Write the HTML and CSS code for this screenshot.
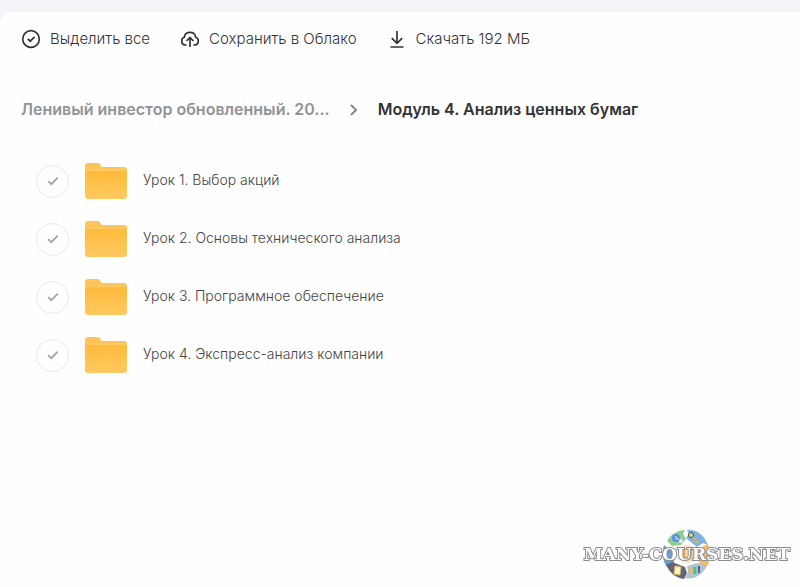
FILE: index.html
```
<!DOCTYPE html>
<html lang="ru">
<head>
<meta charset="utf-8">
<meta name="viewport" content="width=device-width, initial-scale=1">
<title>Модуль 4. Анализ ценных бумаг</title>
<link rel="stylesheet" href="styles.css">
</head>
<body>
<svg class="defs" width="0" height="0" aria-hidden="true">
  <defs>
    <linearGradient id="folder-front" x1="0" y1="0" x2="0" y2="1">
      <stop offset="0" stop-color="#ffba38"/>
      <stop offset="1" stop-color="#ffca62"/>
    </linearGradient>
    <symbol id="folder" viewBox="0 0 42 36">
      <path d="M0 3a3 3 0 0 1 3-3h9.500c1.500 0 2.300.8 3 2l.6 1.200c.4.600.8.800 1.500.800H39a3 3 0 0 1 3 3v10H0z" fill="#fdc559"/>
      <path d="M0 9a2 2 0 0 1 2-2h38a2 2 0 0 1 2 2v24a3 3 0 0 1-3 3H3a3 3 0 0 1-3-3z" fill="url(#folder-front)"/>
      <path d="M1 7.500h40" stroke="#ffca62" fill="none"/>
    </symbol>
    <symbol id="tick" viewBox="0 0 12 10">
      <path d="M1.200 5.200l3.200 3 6.300-6.600" fill="none" stroke="#a0a2a8" stroke-width="1.700"/>
    </symbol>
  </defs>
</svg>
<main class="panel">
  <div class="toolbar">
    <button class="action" type="button">
      <svg width="20" height="20" viewBox="0 0 20 20" aria-hidden="true"><circle cx="10" cy="10" r="8.300"/><path d="M6.800 9.800l2.400 2.400 4.400-4.400"/></svg>
      Выделить все
    </button>
    <button class="action" type="button">
      <svg width="20" height="20" viewBox="0 0 20 20" aria-hidden="true"><path d="M6.700 16H5.300A4 4 0 0 1 1.700 12c0-1.700 1-3.100 2.600-3.700C4.600 5.300 6.900 3.400 10 3.400s5.400 1.900 5.700 4.900c1.600.600 2.600 2 2.600 3.700a4 4 0 0 1-3.600 4h-1.400M10 18V9M6.500 12L10 8.500l3.500 3.500"/></svg>
      Сохранить в Облако
    </button>
    <button class="action" type="button">
      <svg width="20" height="20" viewBox="0 0 20 20" aria-hidden="true"><path d="M10 2v12M4.800 9.200L10 14.400l5.200-5.200M3.500 18h13"/></svg>
      Скачать 192 МБ
    </button>
  </div>
  <nav class="crumbs" aria-label="Папки">
    <a class="crumb" href="#">Ленивый инвестор обновленный. 20...</a>
    <svg class="chevron" width="10" height="14" viewBox="0 0 10 14" aria-hidden="true"><path d="M2 3l5 5-5 5"/></svg>
    <h1 class="current">Модуль 4. Анализ ценных бумаг</h1>
  </nav>
  <ul class="files">
    <li class="file">
      <label class="pick"><input type="checkbox" aria-label="Выбрать урок 1"><svg width="12" height="10"><use href="#tick"/></svg></label>
      <a class="entry" href="#"><svg width="42" height="36"><use href="#folder"/></svg><span class="name">Урок 1. Выбор акций</span></a>
    </li>
    <li class="file">
      <label class="pick"><input type="checkbox" aria-label="Выбрать урок 2"><svg width="12" height="10"><use href="#tick"/></svg></label>
      <a class="entry" href="#"><svg width="42" height="36"><use href="#folder"/></svg><span class="name">Урок 2. Основы технического анализа</span></a>
    </li>
    <li class="file">
      <label class="pick"><input type="checkbox" aria-label="Выбрать урок 3"><svg width="12" height="10"><use href="#tick"/></svg></label>
      <a class="entry" href="#"><svg width="42" height="36"><use href="#folder"/></svg><span class="name">Урок 3. Программное обеспечение</span></a>
    </li>
    <li class="file">
      <label class="pick"><input type="checkbox" aria-label="Выбрать урок 4"><svg width="12" height="10"><use href="#tick"/></svg></label>
      <a class="entry" href="#"><svg width="42" height="36"><use href="#folder"/></svg><span class="name">Урок 4. Экспресс-анализ компании</span></a>
    </li>
  </ul>
</main>
<div class="watermark">
  <svg class="emblem" width="50" height="52" viewBox="0 0 50 52" aria-hidden="true">
    <path d="M5 13C9 6 16 2 23 2l-2 4 3 5-5 6-9 1z" fill="#8fce92"/>
    <path d="M25 2c7-1 14 3 18 9l3 6-5-2-6 4-11-9 3-4z" fill="#7eb2e0"/>
    <path d="M45 16l3 3-2 4c2 5 2 10 0 14l-3 3-5-4-3-7 2-8z" fill="#f4bb69"/>
    <path d="M2 17l6 5 5 0-1 13-8 3C0 30 0 24 2 17z" fill="#6b9fcd"/>
    <path d="M4 37l6-3 13 5 2 6-3 6C14 50 8 45 4 37z" fill="#5d6778"/>
    <path d="M23 50l3-6-1-6 11-3 9 3C41 46 33 52 23 50z" fill="#b0c4cf"/>
    <circle cx="14" cy="10" r="4" fill="#5b91e5"/><path d="M14 8v3h3" stroke="#e7f2ff" fill="none"/>
    <circle cx="19" cy="13" r="2" fill="#e4e8f8"/>
    <circle cx="29" cy="7" r="2.500" fill="#f5d278" stroke="#384b68"/><path d="M31 9l5 7" stroke="#efad50" stroke-width="2"/>
    <path d="M13 38l6 1-1 8-6-1z" fill="#fff2cf" stroke="#e2b65c"/>
    <path d="M29 40v6" stroke="#f1b658" stroke-width="3"/><path d="M33 39v7" stroke="#53b697" stroke-width="3"/><path d="M37 38v7" stroke="#486985" stroke-width="2"/>
    <circle cx="25" cy="26" r="9" fill="#fbe1bc"/>
    <path d="M22 20v8q3 6 7 0v-8" fill="none" stroke="#f0ad52" stroke-width="3"/>
  </svg>
  <span class="mark-text">MANY-COURSES.NET</span>
</div>
</body>
</html>
```
FILE: styles.css
```
* {
  box-sizing: border-box;
}

body {
  margin: 0;
  padding-top: 12px;
  min-height: 100vh;
  display: flex;
  flex-direction: column;
  background: #f4f5f8;
  color: #333;
  font-family: Inter, "Open Sans", sans-serif;
}

.defs {
  position: absolute;
}

svg {
  flex: none;
}

.panel {
  flex: 1;
  padding: 15px 21px;
  background: #fefefe;
  border-top-left-radius: 12px;
}

.toolbar {
  display: flex;
  gap: 30px;
}

.action {
  display: flex;
  align-items: center;
  gap: 9px;
  padding: 0;
  border: 0;
  background: none;
  color: #333;
  font: 300 15px/24px Inter, "Open Sans", sans-serif;
  white-space: nowrap;
  cursor: pointer;
}

.action svg {
  fill: none;
  stroke: #333;
  stroke-width: 1.7;
}

.crumbs {
  display: flex;
  align-items: center;
  gap: 19px;
  margin-top: 46px;
  font-size: 16px;
  line-height: 24px;
  white-space: nowrap;
}

.crumb {
  color: #919399;
  font-weight: 600;
  text-decoration: none;
}

.chevron {
  fill: none;
  stroke: #85878c;
  stroke-width: 2;
}

.current {
  margin: 0;
  font-size: 16px;
  font-weight: 600;
}

.files {
  margin: 31px 0 0;
  padding: 0 0 0 15px;
  list-style: none;
}

.file {
  display: flex;
  align-items: center;
  gap: 16px;
  height: 58px;
}

.pick {
  display: grid;
  place-items: center;
}

.pick > * {
  grid-area: 1 / 1;
}

.pick input {
  appearance: none;
  width: 33px;
  height: 33px;
  margin: 0;
  border: 1px solid #e9e9eb;
  border-radius: 50%;
}

.pick svg {
  pointer-events: none;
}

.entry {
  display: flex;
  align-items: center;
  gap: 16px;
  color: #444;
  font-size: 14px;
  font-weight: 300;
  line-height: 20px;
  text-decoration: none;
}

.name {
  padding-bottom: 3px;
}

.watermark {
  position: fixed;
  right: 10px;
  bottom: 7px;
  display: grid;
  place-items: center;
  pointer-events: none;
}

.watermark > * {
  grid-area: 1 / 1;
}

.mark-text {
  color: #fff;
  font: 700 17px/24px "DejaVu Serif", serif;
  -webkit-text-stroke: 2px #8a8c8f;
  paint-order: stroke fill;
}
```
